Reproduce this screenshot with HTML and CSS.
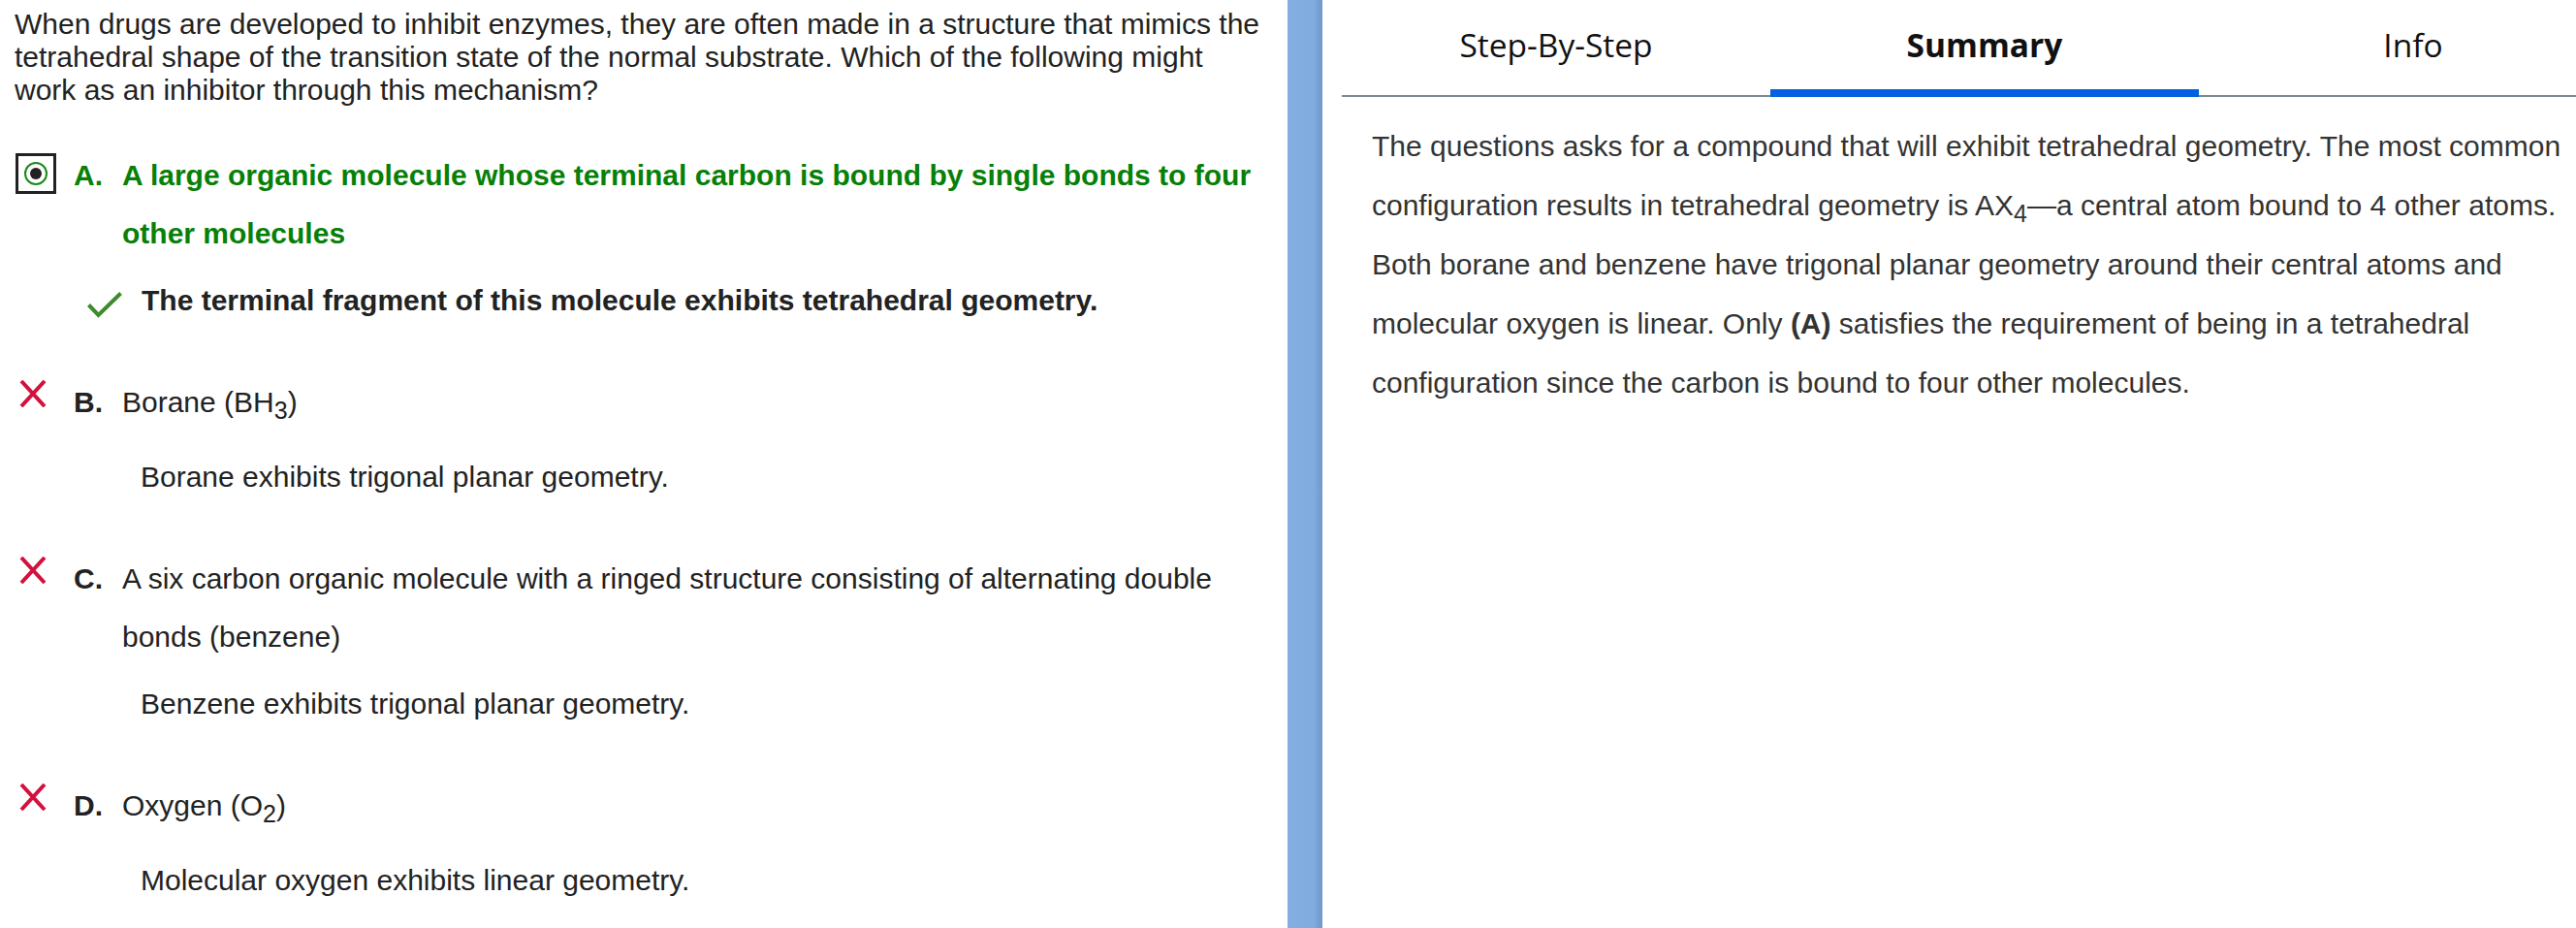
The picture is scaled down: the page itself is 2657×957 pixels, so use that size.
FILE: index.html
```html
<!DOCTYPE html>
<html lang="en">
<head>
  <meta charset="UTF-8">
  <title>Question Review</title>
  <link rel="stylesheet" href="styles.css">
</head>
<body>

  <div class="page">
    <div class="question-pane">
      <p class="stem">When drugs are developed to inhibit enzymes, they are often made in a structure that mimics the tetrahedral shape of the transition state of the normal substrate. Which of the following might work as an inhibitor through this mechanism?</p>

      <div class="choice first correct">
        <div class="choice-row">
          <span class="mark radio"><span class="ring"><span class="dot"></span></span></span>
          <span class="letter">A.</span>
          <span class="choice-text">A large organic molecule whose terminal carbon is bound by single bonds to four other molecules</span>
        </div>
        <div class="explain right">
          <svg class="check" width="36" height="27" viewBox="0 0 36 27">
            <polyline points="1.5,13.5 11.5,24 34.5,1.5" fill="none" stroke="#3e8a2c" stroke-width="4"/>
          </svg>
          <span>The terminal fragment of this molecule exhibits tetrahedral geometry.</span>
        </div>
      </div>

      <div class="choice">
        <div class="choice-row">
          <span class="mark">
            <svg class="cross" width="28" height="28" viewBox="0 0 28 28">
              <path d="M2 1 L26 27 M26 1 L2 27" stroke="#d4103c" stroke-width="4" fill="none"/>
            </svg>
          </span>
          <span class="letter">B.</span>
          <span class="choice-text">Borane (BH<sub>3</sub>)</span>
        </div>
        <div class="explain">Borane exhibits trigonal planar geometry.</div>
      </div>

      <div class="choice">
        <div class="choice-row">
          <span class="mark">
            <svg class="cross" width="28" height="28" viewBox="0 0 28 28">
              <path d="M2 1 L26 27 M26 1 L2 27" stroke="#d4103c" stroke-width="4" fill="none"/>
            </svg>
          </span>
          <span class="letter">C.</span>
          <span class="choice-text">A six carbon organic molecule with a ringed structure consisting of alternating double bonds (benzene)</span>
        </div>
        <div class="explain">Benzene exhibits trigonal planar geometry.</div>
      </div>

      <div class="choice">
        <div class="choice-row">
          <span class="mark">
            <svg class="cross" width="28" height="28" viewBox="0 0 28 28">
              <path d="M2 1 L26 27 M26 1 L2 27" stroke="#d4103c" stroke-width="4" fill="none"/>
            </svg>
          </span>
          <span class="letter">D.</span>
          <span class="choice-text">Oxygen (O<sub>2</sub>)</span>
        </div>
        <div class="explain">Molecular oxygen exhibits linear geometry.</div>
      </div>
    </div>

    <div class="divider"></div>

    <div class="answer-pane">
      <div class="tabs">
        <div class="tab">Step-By-Step</div>
        <div class="tab active">Summary</div>
        <div class="tab">Info</div>
      </div>
      <p class="summary">The questions asks for a compound that will exhibit tetrahedral geometry. The most common configuration results in tetrahedral geometry is AX<sub>4</sub>—a central atom bound to 4 other atoms. Both borane and benzene have trigonal planar geometry around their central atoms and molecular oxygen is linear. Only <b>(A)</b> satisfies the requirement of being in a tetrahedral configuration since the carbon is bound to four other molecules.</p>
    </div>
  </div>

</body>
</html>
```

FILE: styles.css
```css
body {
  margin: 0;
  background: #fff;
  font-family: "Liberation Sans", Arial, sans-serif;
  color: #222;
}
.page {
  display: flex;
  height: 957px;
  overflow: hidden;
}
.question-pane {
  width: 1328px;
  flex-shrink: 0;
  box-sizing: border-box;
  padding: 8px 15px 0 0;
}
.stem {
  width: 1292px;
  margin: 0 0 0 15px;
  font-size: 30px;
  line-height: normal;
}
.choice {
  margin-top: 45px;
  font-size: 30px;
  line-height: 60px;
}
.choice.first {
  margin-top: 41px;
}
.choice-row {
  display: grid;
  grid-template-columns: 42px 32px 1fr;
  column-gap: 18px;
  padding-left: 16px;
}
.mark {
  margin-top: 7px;
  height: 42px;
}
.cross {
  display: block;
  margin-left: 4px;
}
.radio {
  box-sizing: border-box;
  border: 3px solid #222;
  display: flex;
  align-items: center;
  justify-content: center;
}
.ring {
  width: 20px;
  height: 20px;
  border: 2px solid #1a8a1a;
  border-radius: 50%;
  display: flex;
  align-items: center;
  justify-content: center;
}
.dot {
  width: 12px;
  height: 12px;
  border-radius: 50%;
  background: #222;
}
.letter {
  font-weight: bold;
}
.correct .letter,
.correct .choice-text {
  color: #078007;
  font-weight: bold;
}
.explain {
  margin-top: 9px;
  padding-left: 145px;
}
.explain.right {
  display: flex;
  align-items: flex-start;
  padding-left: 90px;
  font-weight: bold;
}
.check {
  margin-top: 21px;
  margin-right: 20px;
  flex-shrink: 0;
}
.divider {
  width: 36px;
  flex-shrink: 0;
  background: linear-gradient(to right, #82aee2 0%, #80ace0 75%, #6f98cc 100%);
}
.answer-pane {
  flex: 1;
  min-width: 0;
  overflow: hidden;
  padding-left: 20px;
}
.tabs {
  display: flex;
  border-bottom: 2px solid #7d8b93;
  margin-right: -200px;
}
.tab {
  width: 442px;
  flex-shrink: 0;
  box-sizing: border-box;
  text-align: center;
  font-family: "Open Sans", "Noto Sans", sans-serif;
  font-size: 33.5px;
  color: #111;
  padding: 23px 0 23px;
  height: 100px;
  margin-bottom: -2px;
  border-bottom: 8px solid transparent;
}
.tab.active {
  font-weight: bold;
  border-bottom-color: #0062e0;
}
.summary {
  margin: 20px 12px 0 31px;
  font-size: 30px;
  line-height: 61px;
  color: #333;
}
.summary sub {
  line-height: 1;
}
```
